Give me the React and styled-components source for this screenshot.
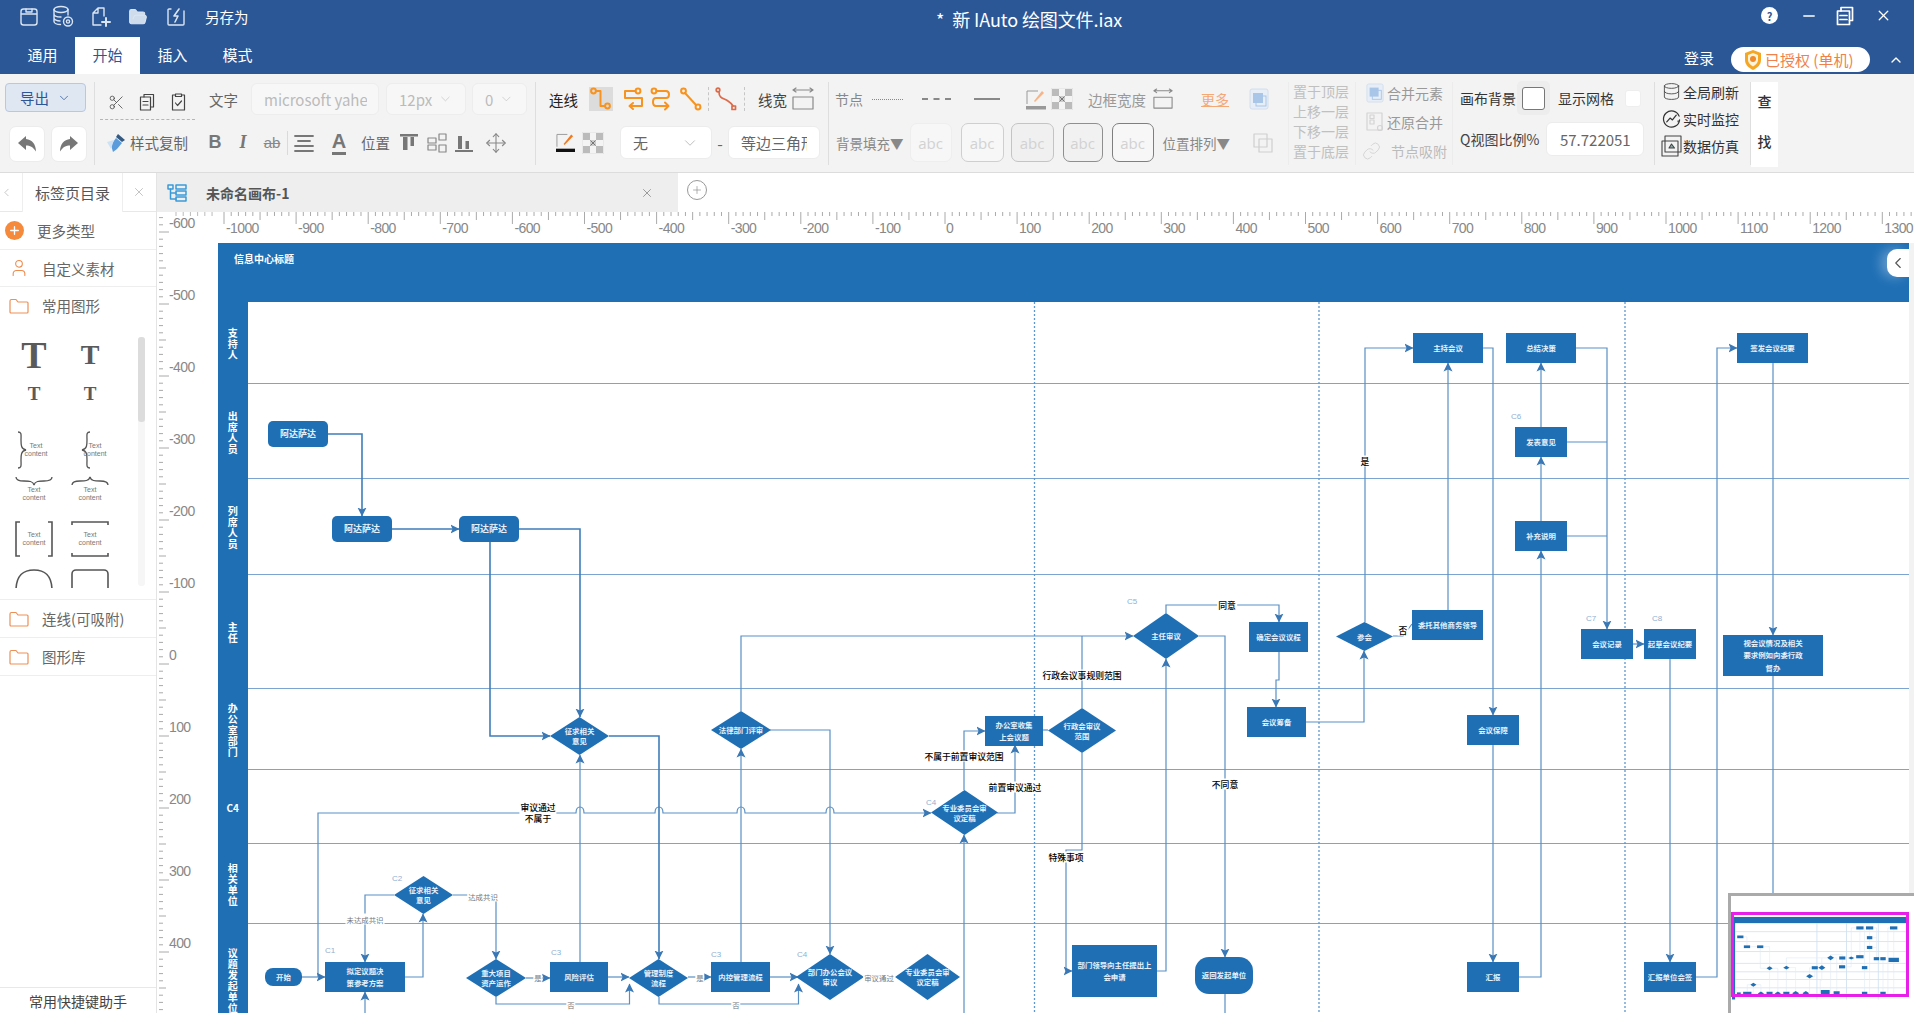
import React from 'react';
import styled, { createGlobalStyle } from 'styled-components';
import { ChevronDown, ChevronUp, ChevronLeft, X, Plus, Minus, Scissors, Move, Link, Database, FolderOpen, User } from 'lucide-react';

const FONT = '"Noto Sans CJK SC", "Open Sans", "Liberation Sans", sans-serif';
const BLUE = '#1f6fb5';
const LINE = '#5a8fc4';
const OX = 218;
const OY = 243;

const Global = createGlobalStyle`
  html, body { margin: 0; padding: 0; background: #fff; font-family: ${FONT}; overflow: hidden; }
  * { box-sizing: border-box; }
`;

const Page = styled.div`width: 1914px; height: 1013px; display: flex; flex-direction: column; overflow: hidden; position: relative; color: #555;`;

/* ---------- title bar ---------- */
const TitleBar = styled.header`height: 74px; background: #2b5797; color: #fff; display: flex; flex-direction: column; flex: none;`;
const TitleRow = styled.div`height: 37px; display: flex; align-items: center; position: relative; padding-bottom: 4px;`;
const QuickIcon = styled.span`display: inline-flex; margin-left: ${p => p.$ml}px; color: #dbe5f2;`;
const SaveAs = styled.span`margin-left: 19px; font-size: 14.5px;`;
const DocTitle = styled.div`position: absolute; left: 936px; top: 6px; font-size: 18px; line-height: 26px; white-space: pre; letter-spacing: -0.1px;`;
const WinButtons = styled.div`margin-left: auto; display: flex; align-items: center; padding-right: 22px; transform: translateY(-1px);`;
const WinBtn = styled.span`display: inline-flex; margin-left: ${p => p.$ml}px;`;
const HelpDot = styled.span`width: 17px; height: 17px; border-radius: 50%; background: #fff; color: #2b5797; font-size: 11px; font-weight: 700; display: flex; align-items: center; justify-content: center;`;
const TabRow = styled.nav`height: 37px; display: flex; align-items: stretch;`;
const MenuTab = styled.span`width: 65px; display: flex; align-items: center; justify-content: center; font-size: 15px; padding-bottom: 2px; background: ${p => p.$on ? '#fff' : 'transparent'}; color: ${p => p.$on ? '#2b5797' : '#fff'}; margin-left: ${p => p.$ml || 0}px;`;
const Login = styled.span`margin-left: auto; align-self: center; font-size: 15px; margin-right: 17px; transform: translateY(2px);`;
const LicensePill = styled.span`width: 139px; height: 25px; align-self: center; margin-top: 8px; background: #fff; border-radius: 13px; display: flex; align-items: center; padding-left: 12px; gap: 2px; color: #f0814a; font-size: 15px; white-space: nowrap; margin-right: 18px;`;
const Collapse = styled.span`align-self: center; display: inline-flex; margin-right: 10px; transform: translateY(4px);`;

/* ---------- ribbon ---------- */
const Ribbon = styled.section`height: 99px; flex: none; display: flex; background: #f3f3f3; border-bottom: 1px solid #dcdcdc; align-items: flex-start;`;
const Group = styled.div`width: ${p => p.$w}px; height: 83px; margin-top: 8px; flex: none; border-right: 1px solid ${p => p.$soft ? '#ececec' : '#dedede'}; display: flex; flex-direction: column;`;
const Row = styled.div`display: flex; align-items: center; height: ${p => p.$h || 32}px; margin-top: ${p => p.$mt || 0}px; white-space: nowrap;`;
const ExportBtn = styled.button`width: 81px; height: 29px; margin: 1px 0 0 5px; background: #dfe7f3; border: 1px solid #b9c8de; border-radius: 4px; color: #2b5797; font: 14.5px ${FONT}; display: flex; align-items: center; justify-content: center; gap: 8px; padding: 0;`;
const HistoryBtn = styled.span`width: 36px; height: 36px; margin-left: ${p => p.$ml}px; background: #fff; border: 1px solid #ececec; border-radius: 7px; display: flex; align-items: center; justify-content: center; color: #777;`;
const Tool = styled.span`width: ${p => p.$w}px; margin-left: ${p => p.$ml || 0}px; margin-top: ${p => p.$mt || 0}px; height: ${p => p.$h || 24}px; display: inline-flex; align-items: center; justify-content: center; flex: none; color: ${p => p.$c || '#666'}; background: ${p => p.$bg || 'transparent'};`;
const Label = styled.span`margin-left: ${p => p.$ml || 0}px; font-size: ${p => p.$fs || 14.5}px; color: ${p => p.$c || '#666'}; flex: none; font-weight: ${p => p.$b || 400}; text-decoration: ${p => p.$u ? 'underline' : 'none'};`;
const Field = styled.span`width: ${p => p.$w}px; height: ${p => p.$h || 32}px; margin-left: ${p => p.$ml || 0}px; flex: none; background: ${p => p.$dim ? '#f7f7f7' : '#fff'}; border: 1px solid ${p => p.$dim ? '#ededed' : '#ececec'}; border-radius: 6px; color: ${p => p.$dim ? '#bbb' : '#666'}; font-size: 15px; display: flex; align-items: center; justify-content: ${p => p.$center ? 'center' : 'flex-start'}; padding: 0 ${p => p.$center ? 0 : 12}px; gap: 6px; overflow: hidden; white-space: nowrap;`;
const ClipText = styled.span`display: block; width: ${p => p.$w}px; overflow: hidden; flex: none; color: ${p => p.$c || 'inherit'};`;
const Grow = styled.span`flex: 1;`;
const ThinRule = styled.div`width: 95px; margin: 4px 0 4px 5px; border-top: 1px dashed #b5b5b5; height: 0;`;
const DashSep = styled.span`width: 0; height: 24px; margin-left: ${p => p.$ml}px; border-left: 1px dashed #c6c6c6; flex: none;`;
const VSep = styled.span`width: 1px; height: 24px; margin-left: ${p => p.$ml}px; background: #dadada; flex: none;`;
const FontB = styled.span`font: 700 18px "Liberation Sans", sans-serif; color: #777;`;
const FontI = styled.span`font: italic 700 18px "Liberation Serif", serif; color: #777;`;
const FontS = styled.span`font: 15px "Liberation Sans", sans-serif; color: #888; text-decoration: line-through;`;
const FontA = styled.span`font: 700 20px/21px "Liberation Sans", sans-serif; color: #777; border-bottom: 3px solid #777;`;
const LineSample = styled.span`width: ${p => p.$w}px; margin-left: ${p => p.$ml}px; border-top: ${p => p.$t}px ${p => p.$s} #888; flex: none; height: 0;`;
const Abc = styled.span`width: ${p => p.$w}px; height: 39px; margin-left: ${p => p.$ml}px; flex: none; border: 1px solid ${p => p.$bd}; border-radius: 7px; background: ${p => p.$bg || '#f7f7f7'}; color: #d2d2d2; font: 15px "Open Sans", sans-serif; display: flex; align-items: center; justify-content: center;`;
const Stack = styled.div`margin-left: 4px; display: flex; flex-direction: column; width: 58px; margin-top: -1px;`;
const StackItem = styled.span`font-size: 14px; line-height: 20px; color: #c0c0c0; white-space: nowrap;`;
const SwatchWrap = styled.span`width: 33px; height: 34px; margin-left: 1px; background: #ededed; border-radius: 5px; display: flex; align-items: center; justify-content: center; flex: none;`;
const Swatch = styled.span`width: ${p => p.$w}px; height: ${p => p.$h}px; margin-left: ${p => p.$ml || 0}px; background: #fff; border: 1px solid ${p => p.$bd}; border-radius: 3px; flex: none;`;
const FindBox = styled.div`width: 27px; height: 85px; margin-top: 8px; padding-bottom: 7px; background: #fff; display: flex; flex-direction: column; align-items: center; justify-content: center; gap: 20px; font-size: 14px; font-weight: 500; color: #333; flex: none; line-height: 20px;`;

/* ---------- main ---------- */
const Main = styled.main`flex: 1; display: flex; min-height: 0;`;
const Side = styled.aside`width: 157px; flex: none; display: flex; flex-direction: column; border-right: 1px solid #e4e4e4; background: #fff;`;
const SideHead = styled.div`height: 39px; flex: none; display: flex; align-items: center; border-bottom: 1px solid #e8e8e8; color: #999;`;
const SideTab = styled.span`width: 101px; height: 39px; margin-left: 9px; display: flex; align-items: center; justify-content: center; font-size: 15px; color: #555; background: #fff; border-left: 1px solid #eee; border-right: 1px solid #eee;`;
const SideRow = styled.div`height: ${p => p.$h || 37}px; flex: none; display: flex; align-items: center; font-size: 14.5px; color: #666; border-bottom: ${p => p.$nb ? 'none' : '1px solid #eee'};`;
const AddDot = styled.span`width: 19px; height: 19px; margin-left: 5px; margin-right: 13px; border-radius: 50%; background: #f5893c; color: #fff; display: flex; align-items: center; justify-content: center;`;
const SideIcon = styled.span`display: inline-flex; margin-left: 9px; margin-right: 13px; color: #f08a4b;`;
const ShapePane = styled.div`height: 276px; flex: none; display: flex; padding-top: 6px; border-bottom: 1px solid #eee;`;
const ShapeGrid = styled.div`width: 138px; height: 258px; overflow: hidden; display: grid; grid-template-columns: 56px 56px; justify-content: start; padding-left: 6px; align-content: start;`;
const ShapeCell = styled.div`height: ${p => p.$h}px; display: flex; align-items: ${p => p.$end ? 'flex-end' : 'center'}; justify-content: center; color: #555;`;
const SerifT = styled.span`font: 700 ${p => p.$fs}px/1 "Liberation Serif", serif; color: #5a5a5a;`;
const ScrollTrack = styled.div`width: 7px; height: 249px; background: #f6f6f6; border-radius: 3px; margin-top: 7px; flex: none;`;
const ScrollThumb = styled.div`width: 7px; height: 85px; background: #dcdcdc; border-radius: 3px;`;
const SideFoot = styled.div`margin-top: auto; height: 26px; border-top: 1px solid #e8e8e8; display: flex; align-items: center; justify-content: center; font-size: 14px; color: #444;`;

const Work = styled.div`flex: 1; min-width: 0; display: flex; flex-direction: column;`;
const TabBar = styled.div`height: 39px; flex: none; display: flex; align-items: stretch; background: #fff;`;
const DocTab = styled.div`width: 521px; background: #eee; display: flex; align-items: center; font-size: 14px; font-weight: 700; color: #555; padding-left: 10px;`;
const DocName = styled.span`margin-left: 19px;`;
const DocClose = styled.span`margin-left: auto; margin-right: 24px; display: inline-flex; color: #777;`;
const AddTab = styled.span`width: 20px; height: 20px; margin: 7px 0 0 9px; border: 1.5px solid #999; border-radius: 50%; color: #888; display: flex; align-items: center; justify-content: center;`;

const CanvasArea = styled.div`flex: 1; display: flex; min-height: 0;`;
const RulerLeft = styled.svg`width: 61px; height: 801px; flex: none; display: block; background: #fff;`;
const CanvasCol = styled.div`flex: 1; min-width: 0; display: flex; flex-direction: column;`;
const RulerTop = styled.svg`width: 1696px; height: 31px; flex: none; display: block; background: #fff;`;
const Stage = styled.div`flex: 1; min-height: 0; position: relative; overflow: hidden; display: flex; background: #fff;`;
const Pool = styled.div`width: 1691px; flex: none; display: flex; flex-direction: column;`;
const PoolHead = styled.div`height: 59px; flex: none; background: ${BLUE}; color: #fff; font-size: 10px; font-weight: 700; padding: 8px 0 0 16px; line-height: 16px;`;
const Lane = styled.div`height: ${p => p.$h}px; flex: none; display: flex;`;
const LaneTitle = styled.div`width: 29.5px; flex: none; background: ${BLUE}; color: #fff; font-size: 10px; line-height: 11px; font-weight: 700; display: flex; align-items: center; justify-content: center; text-align: center;`;
const LaneText = styled.span`display: block; width: min-content;`;
const LaneBody = styled.div`flex: 1; border-bottom: 1.5px solid #7ba5d0;`;
const ScrollStrip = styled.div`flex: 1; background: #f2f2f2;`;
const Wires = styled.svg`position: absolute; left: 0; top: 0; width: 1696px; height: 770px; pointer-events: none;`;
const NodeBase = styled.div.attrs(p => ({ style: { left: p.$x - OX, top: p.$y - OY, width: p.$w, height: p.$h } }))`
  position: absolute; background: ${BLUE}; color: #e8f1fa; font-size: 7.4px; line-height: 12.5px; font-weight: 700; display: flex; align-items: center; justify-content: center; text-align: center; white-space: pre-line;
`;
const RectNode = styled(NodeBase)``;
const RoundNode = styled(NodeBase)`border-radius: ${p => p.$r}px; font-size: ${p => p.$big ? 9 : 7.4}px;`;
const DiamondNode = styled(NodeBase)`clip-path: polygon(50% 0, 100% 50%, 50% 100%, 0 50%); line-height: 10px;`;
const WireLabel = styled.span.attrs(p => ({ style: { left: p.$x - OX, top: p.$y - OY } }))`
  position: absolute; transform: translate(-50%, -50%); background: #fff; white-space: pre-line; text-align: center; padding: 0 1px;
  font-size: ${p => p.$dark ? 8.8 : 7.4}px; line-height: 11px; color: ${p => p.$dark ? '#000' : '#777'}; font-weight: ${p => p.$dark ? 500 : 400};
`;
const StepTag = styled.span.attrs(p => ({ style: { left: p.$x - OX, top: p.$y - OY } }))`
  position: absolute; transform: translate(-50%, -50%); font: 8px "Liberation Sans", sans-serif; color: #8fb0d2;
`;
const SideToggle = styled.span`position: absolute; right: 5px; top: 6px; width: 22px; height: 28px; background: #fff; border-radius: 10px 0 0 10px; display: flex; align-items: center; justify-content: center; color: #555; box-shadow: -6px 0 12px rgba(255,255,255,.3);`;

const Minimap = styled.div`position: absolute; right: 0; bottom: 0; width: 186px; height: 120px; background: #fff; border-top: 3px solid #aaa; border-left: 3px solid #aaa; overflow: hidden;`;
const MiniSvg = styled.svg`display: block; width: 183px; height: 117px;`;
const MiniFrame = styled.div`position: absolute; left: 0; top: 16px; width: 178px; height: 85px; border: 3px solid #e81fe8;`;

/* ---------- data ---------- */
const lanes = [
  ['支持人', 82], ['出席人员', 95], ['列席人员', 96], ['主任', 114],
  ['办公室部门', 81], ['C4', 74], ['相关单位', 80], ['议题发起单位', 112],
];

const nodes = [
  { k: 'r', t: '阿达萨达', x: 268, y: 421, w: 60, h: 26, r: 5, big: 1 },
  { k: 'r', t: '阿达萨达', x: 332, y: 516, w: 60, h: 26, r: 5, big: 1 },
  { k: 'r', t: '阿达萨达', x: 459, y: 516, w: 60, h: 26, r: 5, big: 1 },
  { k: 'd', t: '征求相关\n意见', x: 550, y: 717, w: 59, h: 38 },
  { k: 'd', t: '法律部门评审', x: 711, y: 711, w: 60, h: 38 },
  { k: 'd', t: '征求相关\n意见', x: 394, y: 876, w: 59, h: 38 },
  { k: 'r', t: '开始', x: 265, y: 968, w: 37, h: 18, r: 8 },
  { k: 's', t: '拟定议题决\n策参考方案', x: 325, y: 962, w: 80, h: 30 },
  { k: 'd', t: '重大项目\n资产运作', x: 466, y: 959, w: 60, h: 38 },
  { k: 's', t: '风险评估', x: 550, y: 962, w: 58, h: 30 },
  { k: 'd', t: '管理制度\n流程', x: 629, y: 959, w: 59, h: 38 },
  { k: 's', t: '内控管理流程', x: 711, y: 962, w: 59, h: 30 },
  { k: 'd', t: '部门办公会议\n审议', x: 796, y: 954, w: 68, h: 46 },
  { k: 'd', t: '专业委员会审\n议定稿', x: 895, y: 954, w: 65, h: 46 },
  { k: 'd', t: '专业委员会审\n议定稿', x: 931, y: 790, w: 67, h: 45 },
  { k: 's', t: '办公室收集\n上会议题', x: 985, y: 716, w: 58, h: 30 },
  { k: 'd', t: '行政会审议\n范围', x: 1048, y: 708, w: 68, h: 45 },
  { k: 'd', t: '主任审议', x: 1133, y: 613, w: 66, h: 46 },
  { k: 's', t: '确定会议议程', x: 1249, y: 622, w: 59, h: 30 },
  { k: 's', t: '会议筹备', x: 1247, y: 707, w: 59, h: 30 },
  { k: 'd', t: '参会', x: 1336, y: 622, w: 57, h: 29 },
  { k: 's', t: '部门领导向主任提出上\n会申请', x: 1072, y: 945, w: 85, h: 52 },
  { k: 'r', t: '返回发起单位', x: 1195, y: 957, w: 58, h: 37, r: 14 },
  { k: 's', t: '主持会议', x: 1413, y: 333, w: 70, h: 30 },
  { k: 's', t: '总结决策', x: 1506, y: 333, w: 70, h: 30 },
  { k: 's', t: '签发会议纪要', x: 1737, y: 333, w: 71, h: 30 },
  { k: 's', t: '发表意见', x: 1515, y: 427, w: 52, h: 30 },
  { k: 's', t: '补充说明', x: 1515, y: 521, w: 52, h: 30 },
  { k: 's', t: '委托其他商务领导', x: 1412, y: 610, w: 71, h: 30 },
  { k: 's', t: '会议记录', x: 1581, y: 629, w: 52, h: 30 },
  { k: 's', t: '起草会议纪要', x: 1644, y: 629, w: 52, h: 30 },
  { k: 's', t: '视会议情况及相关\n要求例如向委行政\n督办', x: 1723, y: 635, w: 100, h: 41 },
  { k: 's', t: '会议保障', x: 1467, y: 715, w: 52, h: 30 },
  { k: 's', t: '汇报', x: 1467, y: 962, w: 52, h: 30 },
  { k: 's', t: '汇报单位会签', x: 1644, y: 962, w: 52, h: 30 },
];

const wires = [
  { p: [[328, 434], [362, 434], [362, 516]], a: 1 }, { p: [[392, 529], [459, 529]], a: 1 },
  { p: [[519, 529], [580, 529], [580, 717]], a: 1 }, { p: [[490, 542], [490, 736], [550, 736]], a: 1 },
  { p: [[609, 736], [659, 736], [659, 959]], a: 1 }, { p: [[302, 977], [325, 977]], a: 1 },
  { p: [[394, 895], [365, 895], [365, 962]], a: 1 }, { p: [[405, 977], [423, 977], [423, 914]], a: 1 },
  { p: [[453, 895], [496, 895], [496, 959]], a: 1 }, { p: [[526, 978], [550, 978]], a: 1 },
  { p: [[608, 977], [629, 977]], a: 1 }, { p: [[496, 997], [496, 1004], [629.5, 1004], [629.5, 984]], a: 1 },
  { p: [[580, 962], [580, 755]], a: 1 }, { p: [[688, 977], [711, 977]], a: 1 },
  { p: [[659, 997], [659, 1004], [798.5, 1004], [798.5, 984]], a: 1 }, { p: [[741, 962], [741, 749]], a: 1 },
  { p: [[770, 977], [798, 977]], a: 1 }, { p: [[770, 730], [830, 730], [830, 954]], a: 1 },
  { p: [[741, 711], [741, 636], [1133, 636]], a: 1 }, { p: [[864, 977], [895, 977]] },
  { p: [[964, 1013], [964, 835]], a: 1 }, { p: [[964, 790], [964, 731], [985, 731]], a: 1 },
  { p: [[997, 813], [1015, 813], [1015, 745]], a: 1 }, { p: [[1043, 730], [1048, 730]] },
  { p: [[1082, 708], [1082, 636]] }, { p: [[1082, 753], [1082, 850], [1066, 850], [1066, 971], [1072, 971]], a: 1 },
  { p: [[1157, 971], [1166, 971], [1166, 659]], a: 1 }, { p: [[1166, 613], [1166, 605], [1279, 605], [1279, 622]], a: 1 },
  { p: [[1199, 636], [1225, 636], [1225, 957]], a: 1 }, { p: [[1225, 994], [1225, 1013]] },
  { p: [[1279, 652], [1279, 680], [1276, 680], [1276, 707]], a: 1 }, { p: [[1306, 722], [1364, 722], [1364, 651]], a: 1 },
  { p: [[1365, 622], [1365, 348], [1413, 348]], a: 1 }, { p: [[1393, 636], [1403, 636], [1412, 624]] },
  { p: [[1448, 610], [1448, 363]], a: 1 }, { p: [[1483, 348], [1493, 348], [1493, 715]], a: 1 },
  { p: [[1493, 745], [1493, 962]], a: 1 }, { p: [[1519, 977], [1541, 977], [1541, 551]], a: 1 },
  { p: [[1541, 521], [1541, 457]], a: 1 }, { p: [[1541, 427], [1541, 363]], a: 1 },
  { p: [[1576, 348], [1607, 348], [1607, 629]], a: 1 }, { p: [[1567, 442], [1607, 442]] }, { p: [[1567, 536], [1607, 536]] },
  { p: [[1633, 644], [1644, 644]], a: 1 }, { p: [[1670, 659], [1670, 962]], a: 1 },
  { p: [[1696, 977], [1717, 977], [1717, 348], [1737, 348]], a: 1 }, { p: [[1773, 363], [1773, 635]], a: 1 },
  { p: [[1773, 676], [1773, 1013]] }, { p: [[365, 1013], [365, 992]], a: 1 },
];

const bumpD = (() => {
  let d = 'M318 977 L318 813';
  [580, 659, 741, 830].forEach(x => {
    d += ` L${x - 4} 813 Q${x - 4} 807 ${x} 807 Q${x + 4} 807 ${x + 4} 813`;
  });
  return d + ' L931 813';
})();

const labels = [
  { t: '未达成共识', x: 365, y: 919 }, { t: '达成共识', x: 483, y: 896 }, { t: '是', x: 538, y: 977 }, { t: '否', x: 571, y: 1004 },
  { t: '是', x: 700, y: 977 }, { t: '否', x: 736, y: 1004 }, { t: '审议通过', x: 879, y: 977 },
  { t: '审议通过\n不属于', x: 538, y: 813, d: 1 }, { t: '行政会议事规则范围', x: 1082, y: 675, d: 1 },
  { t: '不属于前置审议范围', x: 964, y: 756, d: 1 }, { t: '前置审议通过', x: 1015, y: 787, d: 1 },
  { t: '不同意', x: 1225, y: 784, d: 1 }, { t: '特殊事项', x: 1066, y: 857, d: 1 }, { t: '同意', x: 1227, y: 605, d: 1 },
  { t: '是', x: 1365, y: 461, d: 1 }, { t: '否', x: 1403, y: 630, d: 1 },
];

const tags = [
  ['C1', 330, 950], ['C2', 397, 878], ['C3', 556, 952], ['C3', 716, 954], ['C4', 802, 954], ['C4', 931, 802],
  ['C5', 1132, 601], ['C6', 1516, 416], ['C7', 1591, 618], ['C8', 1657, 618],
];

const pts = p => p.map(q => q.join(',')).join(' ');

/* ---------- icons ---------- */
const S = ({ w = 20, h = 20, vb = '0 0 20 20', children, sw = 1.4, c = 'currentColor' }) => (
  <svg width={w} height={h} viewBox={vb} fill="none" stroke={c} strokeWidth={sw} strokeLinecap="round" strokeLinejoin="round">{children}</svg>
);
const SaveIco = () => <S><rect x="2" y="2" width="16" height="16" rx="2.5" /><path d="M2.5 7H17.5M7 2v3h6V2" /></S>;
const DbGearIco = () => <S w={23} h={23} vb="0 0 23 23"><ellipse cx="9" cy="4.5" rx="7" ry="3" /><path d="M2 4.5v12c0 1.7 3 3 6.5 3M2 9c0 1.7 3 3 7 3M2 13c0 1.7 3 3 6 3M16 4.5V10" /><circle cx="16" cy="16.5" r="4.5" /><circle cx="16" cy="16.5" r="1.6" /></S>;
const NewIco = () => <S w={22} h={22} vb="0 0 22 22"><path d="M8 2h6v8M8 2L3 7v12h8M3 7h5V2" /><path d="M16 12v8M12 16h8" strokeWidth="2" /></S>;
const ExportIco = () => <S><path d="M5 2H3a1 1 0 0 0-1 1v14a1 1 0 0 0 1 1h14a1 1 0 0 0 1-1V4M7 2" /><path d="M13 2L8 9h4l-3 6" strokeWidth="1.6" /></S>;
const RestoreIco = () => <S w={18} h={20} vb="0 0 18 20" sw={1.7}><rect x="1.5" y="5" width="12" height="13.5" /><path d="M5 5V1.5h11.5v13H13.5M4 9.5h7M4 13.5h7" /></S>;
const ShieldIco = () => <svg width="20" height="22" viewBox="0 0 20 22"><path d="M10 1l8 3v7c0 5-4 8-8 10-4-2-8-5-8-10V4z" fill="#f5a623" /><path d="M10 4l5 2v5c0 3-2.500 5-5 6.500C7.500 16 5 14 5 11V6z" fill="#fff3d9" /><circle cx="10" cy="10" r="3" fill="#f08a2a" /></svg>;
const UndoIco = () => <svg width="22" height="20" viewBox="0 0 22 20"><path d="M10 2L2 9l8 7v-4.500c4 0 7 1.500 10 6 0-7-4-12-10-12.500z" fill="currentColor" /></svg>;
const RedoIco = () => <svg width="22" height="20" viewBox="0 0 22 20"><path d="M12 2l8 7-8 7v-4.500c-4 0-7 1.500-10 6 0-7 4-12 10-12.500z" fill="currentColor" /></svg>;
const CopyIco = () => <S w={16} h={18} vb="0 0 16 18" c="#444" sw={1.2}><rect x="1.500" y="4" width="10" height="13" /><path d="M5 4V1.500h9.500V14H11.500M4 8.500h5M4 12h5" /></S>;
const PasteIco = () => <S w={15} h={18} vb="0 0 15 18" c="#444" sw={1.2}><path d="M4.500 2H1.500v15h12V2h-3M4.500 1h6v2.500h-6z" /><path d="M4.500 10l2 2.500 4-4.500" /></S>;
const BrushIco = () => <svg width="24" height="22" viewBox="0 0 24 22"><path d="M14 2l7 6-3 2-6-5z" fill="#35597f" /><path d="M12 6l6 5-5 6-4 3-2-7z" fill="#5a9bdc" /><path d="M3 10l7-2-3 9z" fill="#cfe2f5" /></svg>;
const AlignIco = () => <S w={22} h={20} vb="0 0 22 20" c="#777" sw={1.8}><path d="M2 3h18M5 8h12M2 13h18M2 18h18" /></S>;
const TopIco = () => <svg width="20" height="20" viewBox="0 0 20 20" fill="#777"><rect x="1" y="1" width="18" height="2.500" /><rect x="4" y="4" width="4.500" height="13" /><rect x="11.500" y="4" width="3.500" height="9" /></svg>;
const MidIco = () => <S w={22} h={22} vb="0 0 22 22" c="#888" sw={1.2}><rect x="2" y="6" width="8" height="5" /><rect x="2" y="13" width="8" height="5" /><rect x="13" y="2" width="7" height="6" /><rect x="13" y="13" width="7" height="7" /></S>;
const BottomIco = () => <svg width="20" height="20" viewBox="0 0 20 20" fill="#777"><rect x="1" y="17" width="18" height="2" /><rect x="4" y="3" width="4" height="13" /><rect x="11.500" y="8" width="3.500" height="8" /></svg>;
const Elbow = () => <S w={22} h={24} vb="0 0 22 24" c="#f7931e" sw={2}><circle cx="3.500" cy="4" r="2.400" /><path d="M6 4h4.500v15H15" /><circle cx="17.500" cy="19" r="2.400" /></S>;
const Snake = () => <S w={23} h={24} vb="0 0 23 24" c="#f7931e" sw={2}><circle cx="16" cy="4" r="2.400" /><path d="M13.500 4H3v7h17v8H8M11 16l-3.500 3 3.500 3" /></S>;
const SnakeRound = () => <S w={22} h={24} vb="0 0 22 24" c="#f7931e" sw={2}><circle cx="4" cy="4" r="2.400" /><path d="M6.500 4H16c4 0 4 7 0 7H6c-4 0-4 8 0 8h12M15 15.500l3.500 3.500-3.500 3.500" /></S>;
const Diag = () => <S w={22} h={24} vb="0 0 22 24" c="#f7931e" sw={2}><circle cx="3.500" cy="4" r="2.400" /><path d="M5 6l11 12" /><circle cx="18" cy="20" r="2.400" /></S>;
const CurveIco = () => <S w={23} h={24} vb="0 0 23 24" c="#dd6b4a" sw={1.7}><circle cx="3" cy="3" r="1.800" /><path d="M4 5c0 7 5 6 9 9 3 2 4 3 5 5" /><rect x="17" y="19" width="3.500" height="3.500" /></S>;
const WidthIco = () => <S w={22} h={24} vb="0 0 22 24" c="#8a8a8a" sw={1.2}><path d="M1 3h20M4 1L1 3l3 2M18 1l3 2-3 2" /><rect x="1" y="10" width="20" height="12" /></S>;
const PenIco = ({ bar = '#111', pen = '#f07a20' }) => <svg width="20" height="21" viewBox="0 0 20 21" fill="none"><path d="M1 15V2h11" stroke="#999" strokeWidth="1" /><path d="M8 12L16 2l2 2-9 9z" fill={pen} /><rect x="0" y="17" width="20" height="3.500" fill={bar} /></svg>;
const CheckerIco = ({ size = 22 }) => <svg width={size} height={size} viewBox="0 0 22 22"><rect width="22" height="22" fill="#f4f4f4" stroke="#ddd" /><rect x="1" y="1" width="7" height="7" fill="#bbb" /><rect x="14" y="1" width="7" height="7" fill="#bbb" /><rect x="8" y="8" width="6" height="6" fill="#ccc" /><rect x="1" y="14" width="7" height="7" fill="#bbb" /><rect x="14" y="14" width="7" height="7" fill="#bbb" /><path d="M8.500 8.500l5 5M13.500 8.500l-5 5" stroke="#777" /></svg>;
const MergeIco = ({ c = '#a9c5e8' }) => <svg width="20" height="22" viewBox="0 0 20 22"><rect x="1" y="1" width="18" height="20" rx="2" fill="#e7eef7" stroke="#d2deec" /><rect x="4" y="5" width="10" height="10" fill={c} /><rect x="7" y="8" width="10" height="10" fill="none" stroke={c} /></svg>;
const LayerIco = () => <S w={22} h={22} vb="0 0 22 22" c="#cfcfcf" sw={1.2}><rect x="2" y="2" width="13" height="13" /><rect x="7" y="7" width="13" height="13" /></S>;
const UnmergeIco = () => <S w={18} h={20} vb="0 0 18 20" c="#d4d4d4" sw={1.2}><rect x="1" y="1" width="15" height="17" /><rect x="4" y="8" width="4" height="4" /><rect x="4" y="3" width="4" height="3.500" /><circle cx="14" cy="16" r="2.500" /></S>;
const MonitorIco = () => <S c="#333" sw={1.3}><path d="M18 7a8.500 8.500 0 1 0 .5 4" /><path d="M5 13l3.500-4 2.500 2 4-5" /><path d="M17 12v1" /></S>;
const SimIco = () => <S w={21} h={22} vb="0 0 21 22" c="#444" sw={1.1}><rect x="4" y="1" width="16" height="16" /><rect x="1" y="6" width="16" height="15" /><path d="M8 13l2.500-4 3 4z" fill="#8aa" /></S>;
const TreeIco = () => <S w={20} h={18} vb="0 0 20 18" c="#3a9ad9" sw={1.5}><rect x="1" y="1" width="5" height="4" /><rect x="9" y="1" width="10" height="4" /><rect x="9" y="7" width="10" height="4" /><rect x="9" y="13" width="10" height="4" /><path d="M3.500 5v10H9M3.500 9H9" /></S>;
const FolderIco = () => <S w={20} h={16} vb="0 0 20 16" c="#ee8f55" sw={1.2}><path d="M1 3a1.500 1.500 0 0 1 1.500-1.500H7L9 4h9a1 1 0 0 1 1 1v9a1 1 0 0 1-1 1H2a1 1 0 0 1-1-1z" /></S>;

/* ---------- shape thumbnails (real text inside) ---------- */
const TC = ({ x = 28, y = 12, size = 7 }) => (
  <g fill="#777" stroke="none" fontFamily="'Liberation Sans', sans-serif" fontSize={size} textAnchor="middle">
    <text x={x} y={y}>Text</text><text x={x} y={y + 8}>content</text>
  </g>
);
const Thumb = ({ h, children }) => <svg width="56" height={h} viewBox={`0 0 56 ${h}`} fill="none" stroke="#555" strokeWidth="1.300">{children}</svg>;

const ShapeLibrary = () => (
  <ShapeGrid>
    <ShapeCell $h={50}><SerifT $fs={38}>T</SerifT></ShapeCell>
    <ShapeCell $h={50}><SerifT $fs={28}>T</SerifT></ShapeCell>
    <ShapeCell $h={26}><SerifT $fs={19}>T</SerifT></ShapeCell>
    <ShapeCell $h={26}><SerifT $fs={19}>T</SerifT></ShapeCell>
    <ShapeCell $h={63} $end><Thumb h={38}><path d="M12 1c4 0 3 3 3 8s0 9 5 10c-5 1-5 5-5 10s1 8-3 8" /><TC x={30} y={17} /></Thumb></ShapeCell>
    <ShapeCell $h={63} $end><Thumb h={38}><path d="M28 1c-4 0-3 3-3 8s0 9-5 10c5 1 5 5 5 10s-1 8 3 8" /><TC x={33} y={17} /></Thumb></ShapeCell>
    <ShapeCell $h={40}><Thumb h={28}><path d="M10 2c0 3 3 4 8 4s9 0 10 4c1-4 5-4 10-4s8-1 8-4" /><TC y={17} /></Thumb></ShapeCell>
    <ShapeCell $h={40}><Thumb h={28}><path d="M10 10c0-3 3-4 8-4s9 0 10-4c1 4 5 4 10 4s8 1 8 4" /><TC y={17} /></Thumb></ShapeCell>
    <ShapeCell $h={60}><Thumb h={36}><path d="M14 1h-4v34h4M42 1h4v34h-4" strokeWidth="1.600" /><TC y={16} /></Thumb></ShapeCell>
    <ShapeCell $h={60}><Thumb h={36}><path d="M10 4V1h36v3M10 32v3h36v-3" strokeWidth="1.600" /><TC y={16} /></Thumb></ShapeCell>
    <ShapeCell $h={20}><Thumb h={20}><path d="M10 22C10 5 18 1 28 1s18 4 18 21" strokeWidth="1.600" /></Thumb></ShapeCell>
    <ShapeCell $h={20}><Thumb h={20}><path d="M10 22V5a4 4 0 0 1 4-4h28a4 4 0 0 1 4 4v17" strokeWidth="1.600" /></Thumb></ShapeCell>
  </ShapeGrid>
);

/* ---------- rulers ---------- */
const RT = ({ x, y, children }) => (
  <text x={x} y={y} fill="#888" stroke="none" fontFamily="'Liberation Sans', sans-serif" fontSize="14" letterSpacing="-0.6">{children}</text>
);
const TopTicks = () => {
  const items = [];
  const unit = 7.21;
  const zero = 945;
  for (let i = -110; i <= 135; i++) {
    const x = zero + i * unit;
    if (x < 218) continue;
    const major = i % 10 === 0;
    const half = !major && i % 5 === 0;
    items.push(<line key={i} x1={x} x2={x} y1={212} y2={major ? 224 : half ? 220 : 216} stroke="#aaa" strokeWidth="1" />);
    if (major) items.push(<RT key={`l${i}`} x={x + (i === 0 ? 1 : 2)} y={233}>{i * 10}</RT>);
  }
  return items;
};
const LeftTicks = () => {
  const items = [];
  const unit = 7.2;
  const zero = 664;
  for (let i = -62; i <= 48; i++) {
    const y = zero + i * unit;
    const major = i % 10 === 0;
    const half = !major && i % 5 === 0;
    items.push(<line key={i} y1={y} y2={y} x1={159} x2={major ? 169 : half ? 166 : 163} stroke="#aaa" strokeWidth="1" />);
    if (major) items.push(<RT key={`l${i}`} x={169} y={y - 4}>{i * 10}</RT>);
  }
  for (let x = 176; x < 218; x += 7.21) items.push(<line key={`t${x}`} x1={x} x2={x} y1={212} y2={216} stroke="#bbb" />);
  return items;
};

/* ---------- diagram ---------- */
const NODE_KIND = { r: RoundNode, s: RectNode, d: DiamondNode };

const WireMarkers = () => (
  <defs>
    <marker id="arrow" markerUnits="userSpaceOnUse" markerWidth="10" markerHeight="10" refX="8.500" refY="5" orient="auto">
      <path d="M0 .5L9 5 0 9.500 2 5z" fill="#3a78b5" />
    </marker>
  </defs>
);

const Diagram = () => (
  <>
    <Wires viewBox={`${OX} ${OY} 1696 770`}>
      <WireMarkers />
      {[1034.5, 1319, 1625].map(x => <line key={x} x1={x} x2={x} y1={302} y2={1013} stroke="#5c97cf" strokeWidth="1.300" strokeDasharray="2 2" />)}
      <path d={bumpD} fill="none" stroke={LINE} strokeWidth="1.200" markerEnd="url(#arrow)" />
      {wires.map((w, i) => (
        <polyline key={i} points={pts(w.p)} fill="none" stroke={i < 5 ? '#3f7db9' : LINE} strokeWidth={i < 5 ? 1.6 : 1.200} markerEnd={w.a ? 'url(#arrow)' : undefined} />
      ))}
    </Wires>
    {nodes.map((n, i) => {
      const C = NODE_KIND[n.k];
      return <C key={i} $x={n.x} $y={n.y} $w={n.w} $h={n.h} $r={n.r} $big={n.big}>{n.t}</C>;
    })}
    {labels.map((l, i) => <WireLabel key={i} $x={l.x} $y={l.y} $dark={l.d}>{l.t}</WireLabel>)}
    {tags.map((t, i) => <StepTag key={i} $x={t[1]} $y={t[2]}>{t[0]}</StepTag>)}
    <SideToggle><ChevronLeft size={18} strokeWidth={1.500} /></SideToggle>
  </>
);

const MK = 0.104;
const MiniMap = () => (
  <Minimap>
    <MiniSvg viewBox="0 0 183 117">
      <g transform={`translate(1 21) scale(${MK}) translate(-218 -243)`}>
        <rect x="218" y="243" width="1691" height="59" fill={BLUE} />
        <rect x="218" y="243" width="30" height="793" fill={BLUE} />
        {[384, 479, 575, 689, 770, 844, 924].map(y => <line key={y} x1="248" x2="1909" y1={y} y2={y} stroke="#c6d8ea" strokeWidth="6" />)}
        {[1034.5, 1319, 1625].map(x => <line key={x} x1={x} x2={x} y1="302" y2="1036" stroke="#cfdff0" strokeWidth="8" />)}
        {wires.map((w, i) => <polyline key={i} points={pts(w.p)} fill="none" stroke="#e0ebf5" strokeWidth="6" />)}
        {nodes.map((n, i) => n.k === 'd'
          ? <polygon key={i} points={`${n.x + n.w / 2},${n.y} ${n.x + n.w},${n.y + n.h / 2} ${n.x + n.w / 2},${n.y + n.h} ${n.x},${n.y + n.h / 2}`} fill={BLUE} />
          : <rect key={i} x={n.x} y={n.y} width={n.w} height={n.h} fill={BLUE} />)}
      </g>
    </MiniSvg>
    <MiniFrame />
  </Minimap>
);

export default function App() {
  return (
    <Page>
      <Global />
      <TitleBar>
        <TitleRow>
          <QuickIcon $ml={19}><SaveIco /></QuickIcon>
          <QuickIcon $ml={13}><DbGearIco /></QuickIcon>
          <QuickIcon $ml={15}><NewIco /></QuickIcon>
          <QuickIcon $ml={16}><FolderOpen size={20} fill="#cfdcec" strokeWidth={1.300} /></QuickIcon>
          <QuickIcon $ml={18}><ExportIco /></QuickIcon>
          <SaveAs>另存为</SaveAs>
          <DocTitle>*  新 IAuto 绘图文件.iax</DocTitle>
          <WinButtons>
            <HelpDot>?</HelpDot>
            <WinBtn $ml={22}><Minus size={18} strokeWidth={1.700} /></WinBtn>
            <WinBtn $ml={18}><RestoreIco /></WinBtn>
            <WinBtn $ml={21}><X size={17} strokeWidth={1.800} /></WinBtn>
          </WinButtons>
        </TitleRow>
        <TabRow>
          <MenuTab $ml={10}>通用</MenuTab>
          <MenuTab $on>开始</MenuTab>
          <MenuTab>插入</MenuTab>
          <MenuTab>模式</MenuTab>
          <Login>登录</Login>
          <LicensePill><ShieldIco /><span>已授权 (单机)</span></LicensePill>
          <Collapse><ChevronUp size={16} strokeWidth={2} /></Collapse>
        </TabRow>
      </TitleBar>

      <Ribbon>
        <Group $w={95}>
          <ExportBtn>导出<ChevronDown size={14} strokeWidth={1.300} /></ExportBtn>
          <Row $h={36} $mt={14}>
            <HistoryBtn $ml={9}><UndoIco /></HistoryBtn>
            <HistoryBtn $ml={6}><RedoIco /></HistoryBtn>
          </Row>
        </Group>
        <Group $w={441}>
          <Row $mt={1}>
            <Tool $w={22} $ml={10} $mt={6} $c="#444"><Scissors size={17} strokeWidth={1.100} /></Tool>
            <Tool $w={22} $ml={9} $mt={6}><CopyIco /></Tool>
            <Tool $w={22} $ml={9} $mt={6}><PasteIco /></Tool>
            <Label $ml={20}>文字</Label>
            <Field $w={128} $ml={13} $dim><ClipText $w={103}>microsoft yahei</ClipText></Field>
            <Field $w={80} $ml={7} $dim>12px<ChevronDown size={16} strokeWidth={1} /></Field>
            <Field $w={55} $ml={6} $dim>0<ChevronDown size={16} strokeWidth={1} /></Field>
          </Row>
          <ThinRule />
          <Row $h={37}>
            <Tool $w={24} $ml={9}><BrushIco /></Tool>
            <Label $ml={2}>样式复制</Label>
            <Tool $w={20} $ml={17}><FontB>B</FontB></Tool>
            <Tool $w={20} $ml={8}><FontI>I</FontI></Tool>
            <Tool $w={20} $ml={9}><FontS>ab</FontS></Tool>
            <VSep $ml={5} />
            <Tool $w={22} $ml={5}><AlignIco /></Tool>
            <Tool $w={20} $ml={14}><FontA>A</FontA></Tool>
            <Label $ml={12} $fs={14.5}>位置</Label>
            <Tool $w={22} $ml={8}><TopIco /></Tool>
            <Tool $w={22} $ml={6}><MidIco /></Tool>
            <Tool $w={22} $ml={5}><BottomIco /></Tool>
            <Tool $w={22} $ml={10} $c="#888"><Move size={22} strokeWidth={1.200} /></Tool>
          </Row>
        </Group>
        <Group $w={293}>
          <Row $mt={1}>
            <Label $ml={13} $c="#222">连线</Label>
            <Tool $w={24} $ml={11} $bg="#dcdcdc"><Elbow /></Tool>
            <Tool $w={23} $ml={9}><Snake /></Tool>
            <Tool $w={22} $ml={5}><SnakeRound /></Tool>
            <Tool $w={22} $ml={8}><Diag /></Tool>
            <DashSep $ml={6} />
            <Tool $w={23} $ml={6}><CurveIco /></Tool>
            <DashSep $ml={6} />
            <Label $ml={13} $c="#444">线宽</Label>
            <Tool $w={22} $ml={5}><WidthIco /></Tool>
          </Row>
          <Row $h={35} $mt={10}>
            <Tool $w={19} $ml={20}><PenIco /></Tool>
            <Tool $w={22} $ml={7}><CheckerIco /></Tool>
            <Field $w={92} $h={33} $ml={16}>无<Grow /><ChevronDown size={18} strokeWidth={1} color="#aaa" /></Field>
            <Tool $w={8} $ml={4}>-</Tool>
            <Field $w={92} $h={33} $ml={4}><ClipText $w={66}>等边三角形</ClipText></Field>
          </Row>
        </Group>
        <Group $w={460} $soft>
          <Row $mt={1}>
            <Label $ml={6} $c="#888" $fs={14}>节点</Label>
            <LineSample $w={31} $ml={9} $t={1} $s="dotted" />
            <LineSample $w={29} $ml={19} $t={2} $s="dashed" />
            <LineSample $w={26} $ml={23} $t={2} $s="solid" />
            <Tool $w={20} $ml={26}><PenIco bar="#999" pen="#f6b487" /></Tool>
            <Tool $w={22} $ml={5}><CheckerIco /></Tool>
            <Label $ml={15} $c="#999">边框宽度</Label>
            <Tool $w={20} $ml={7}><WidthIco /></Tool>
            <Label $ml={28} $c="#f4a874" $fs={14} $u>更多</Label>
            <Tool $w={22} $ml={19}><MergeIco /></Tool>
          </Row>
          <Row $h={39} $mt={8}>
            <Label $ml={7} $c="#888" $fs={13.5}>背景填充▼</Label>
            <Abc $w={42} $ml={6} $bd="#eee">abc</Abc>
            <Abc $w={43} $ml={9} $bd="#cfcfcf">abc</Abc>
            <Abc $w={43} $ml={7} $bd="#c4c4c4" $bg="#f0f0f0">abc</Abc>
            <Abc $w={40} $ml={9} $bd="#8f8f8f" $bg="#f1f1f1">abc</Abc>
            <Abc $w={42} $ml={9} $bd="#7f7f7f">abc</Abc>
            <Label $ml={9} $c="#888" $fs={13.5}>位置排列▼</Label>
            <Tool $w={22} $ml={22}><LayerIco /></Tool>
          </Row>
        </Group>
        <Group $w={67} $soft>
          <Stack>
            <StackItem>置于顶层</StackItem>
            <StackItem>上移一层</StackItem>
            <StackItem>下移一层</StackItem>
            <StackItem>置于底层</StackItem>
          </Stack>
        </Group>
        <Group $w={97} $soft>
          <Row $h={30} $mt={-3}>
            <Tool $w={18} $ml={10}><MergeIco /></Tool>
            <Label $ml={3} $fs={14} $c="#999">合并元素</Label>
          </Row>
          <Row $h={30}>
            <Tool $w={18} $ml={10}><UnmergeIco /></Tool>
            <Label $ml={3} $fs={14} $c="#999">还原合并</Label>
          </Row>
          <Row $h={30}>
            <Tool $w={19} $ml={6} $c="#d4d4d4"><Link size={20} strokeWidth={1.200} /></Tool>
            <Label $ml={10} $fs={14} $c="#bbb">节点吸附</Label>
          </Row>
        </Group>
        <Group $w={202}>
          <Row $h={34} $mt={-1}>
            <Label $ml={7} $fs={14} $c="#333">画布背景</Label>
            <SwatchWrap><Swatch $w={23} $h={23} $bd="#777" /></SwatchWrap>
            <Label $ml={8} $fs={14} $c="#333">显示网格</Label>
            <Swatch $w={16} $h={17} $ml={11} $bd="#eee" />
          </Row>
          <Row $h={34} $mt={7}>
            <Label $ml={7} $fs={14} $c="#444">Q视图比例%</Label>
            <Field $w={98} $h={34} $ml={7} $center>57.722051</Field>
          </Row>
        </Group>
        <Group $w={96}>
          <Row $h={27} $mt={-4}>
            <Tool $w={19} $ml={7} $c="#444"><Database size={19} strokeWidth={1.100} /></Tool>
            <Label $ml={2} $fs={14} $c="#333">全局刷新</Label>
          </Row>
          <Row $h={27}>
            <Tool $w={19} $ml={7}><MonitorIco /></Tool>
            <Label $ml={2} $fs={14} $c="#333">实时监控</Label>
          </Row>
          <Row $h={27}>
            <Tool $w={21} $ml={6}><SimIco /></Tool>
            <Label $ml={1} $fs={14} $c="#333">数据仿真</Label>
          </Row>
        </Group>
        <FindBox><span>查</span><span>找</span></FindBox>
      </Ribbon>

      <Main>
        <Side>
          <SideHead>
            <ChevronLeft size={13} strokeWidth={1} />
            <SideTab>标签页目录</SideTab>
            <Tool $w={20} $ml={6} $c="#999"><X size={14} strokeWidth={1} /></Tool>
          </SideHead>
          <SideRow $h={38}><AddDot><Plus size={13} strokeWidth={2.500} /></AddDot>更多类型</SideRow>
          <SideRow><SideIcon><User size={20} strokeWidth={1.300} /></SideIcon>自定义素材</SideRow>
          <SideRow $nb><SideIcon><FolderIco /></SideIcon>常用图形</SideRow>
          <ShapePane>
            <ShapeLibrary />
            <ScrollTrack><ScrollThumb /></ScrollTrack>
          </ShapePane>
          <SideRow $h={38}><SideIcon><FolderIco /></SideIcon>连线(可吸附)</SideRow>
          <SideRow $h={38}><SideIcon><FolderIco /></SideIcon>图形库</SideRow>
          <SideFoot>常用快捷键助手</SideFoot>
        </Side>

        <Work>
          <TabBar>
            <DocTab>
              <TreeIco />
              <DocName>未命名画布-1</DocName>
              <DocClose><X size={14} strokeWidth={1.200} /></DocClose>
            </DocTab>
            <AddTab><Plus size={12} strokeWidth={1.300} /></AddTab>
          </TabBar>
          <CanvasArea>
            <RulerLeft viewBox="157 212 61 801"><LeftTicks /></RulerLeft>
            <CanvasCol>
              <RulerTop viewBox="218 212 1696 31"><TopTicks /></RulerTop>
              <Stage>
                <Pool>
                  <PoolHead>信息中心标题</PoolHead>
                  {lanes.map(([t, h]) => (
                    <Lane key={t} $h={h}>
                      <LaneTitle><LaneText>{t}</LaneText></LaneTitle>
                      <LaneBody />
                    </Lane>
                  ))}
                </Pool>
                <ScrollStrip />
                <Diagram />
                <MiniMap />
              </Stage>
            </CanvasCol>
          </CanvasArea>
        </Work>
      </Main>
    </Page>
  );
}
